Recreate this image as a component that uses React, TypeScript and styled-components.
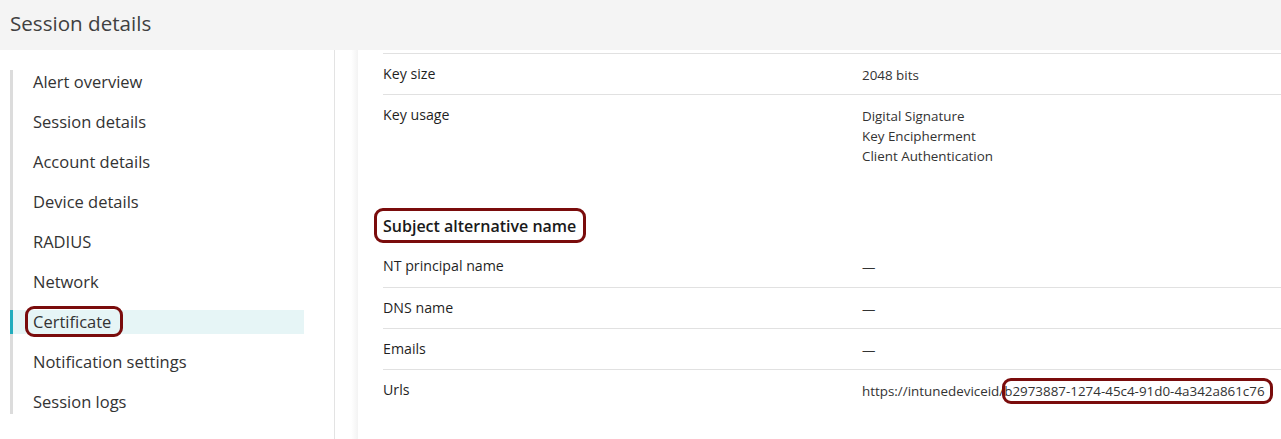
import React from 'react';
import styled, { createGlobalStyle } from 'styled-components';

const GlobalStyle = createGlobalStyle`
  html, body {
    margin: 0;
    padding: 0;
    background: #fff;
    font-family: 'Open Sans', 'Noto Sans', Arial, sans-serif;
    color: #222;
  }
`;

const Page = styled.div`
  width: 1281px;
  height: 439px;
  overflow: hidden;
  display: flex;
  flex-direction: column;
`;

const Header = styled.header`
  height: 50px;
  flex: none;
  background: #f4f4f4;
  display: flex;
  align-items: center;
  padding: 0 0 5px 10px;
  box-sizing: border-box;
`;

const Title = styled.h1`
  margin: 0;
  font-size: 20.6px;
  font-weight: 400;
  color: #404040;
`;

const Body = styled.div`
  flex: 1;
  display: flex;
  min-height: 0;
`;

const Sidebar = styled.aside`
  width: 335px;
  flex: none;
  border-right: 1px solid #e3e3e3;
  padding: 20px 30px 0 10px;
  box-sizing: border-box;
`;

const NavList = styled.ul`
  list-style: none;
  margin: 0;
  padding: 0;
  border-left: 3px solid #dcdcdc;
  display: flex;
  flex-direction: column;
  gap: 16px;
`;

const NavItem = styled.li<{ $active?: boolean }>`
  height: 24px;
  margin-left: -3px;
  padding-left: 20px;
  border-left: 3px solid ${p => (p.$active ? '#22adbd' : 'transparent')};
  background: ${p => (p.$active ? '#e6f5f6' : 'transparent')};
  font-size: 16.5px;
  line-height: 24px;
  color: #333;
  white-space: nowrap;
`;

const Mark = styled.span<{ $t?: number; $r?: number; $b?: number; $l?: number }>`
  position: relative;
  &::after {
    content: '';
    position: absolute;
    top: ${p => p.$t ?? -6}px;
    right: ${p => p.$r ?? -8}px;
    bottom: ${p => p.$b ?? -6}px;
    left: ${p => p.$l ?? -8}px;
    border: 3px solid #7a0c0c;
    border-radius: 9px;
    pointer-events: none;
  }
`;

const Gutter = styled.div`
  width: 23px;
  flex: none;
  background: linear-gradient(to right, #fff 70%, #f3f3f3);
`;

const Content = styled.main`
  flex: 1;
  padding: 3px 0 0 25px;
  background: #fff;
`;

const Row = styled.div<{ $first?: boolean }>`
  display: grid;
  grid-template-columns: 479px 1fr;
  border-top: ${p => (p.$first ? 'none' : '1px solid #e1e1e1')};
  min-height: 41px;
  padding: 9px 0 8px;
  box-sizing: border-box;
`;

const Label = styled.div`
  font-size: 14.2px;
  line-height: 22px;
  color: #1f1f1f;
`;

const Value = styled.div`
  font-size: 13.4px;
  line-height: 20px;
  color: #333;
  padding-top: 2px;
  white-space: nowrap;
`;

const Dash = styled.span`
  color: #333;
`;

const SectionTitle = styled.h2`
  margin: 40px 0 8px;
  font-size: 16px;
  font-weight: 600;
  line-height: 24px;
  color: #1a1a1a;
`;

const navItems = [
  'Alert overview',
  'Session details',
  'Account details',
  'Device details',
  'RADIUS',
  'Network',
  'Certificate',
  'Notification settings',
  'Session logs',
];

export default function App() {
  return (
    <Page>
      <GlobalStyle />
      <Header>
        <Title>Session details</Title>
      </Header>
      <Body>
        <Sidebar>
          <NavList>
            {navItems.map(item => (
              <NavItem key={item} $active={item === 'Certificate'}>
                {item === 'Certificate' ? <Mark $t={-4} $b={-4} $r={-12}>{item}</Mark> : item}
              </NavItem>
            ))}
          </NavList>
        </Sidebar>
        <Gutter />
        <Content>
          <Row>
            <Label>Key size</Label>
            <Value>2048 bits</Value>
          </Row>
          <Row>
            <Label>Key usage</Label>
            <Value>
              Digital Signature
              <br />
              Key Encipherment
              <br />
              Client Authentication
            </Value>
          </Row>
          <SectionTitle>
            <Mark $t={-7} $b={-6} $l={-9} $r={-10}>Subject alternative name</Mark>
          </SectionTitle>
          <Row $first>
            <Label>NT principal name</Label>
            <Value><Dash>—</Dash></Value>
          </Row>
          <Row>
            <Label>DNS name</Label>
            <Value><Dash>—</Dash></Value>
          </Row>
          <Row>
            <Label>Emails</Label>
            <Value><Dash>—</Dash></Value>
          </Row>
          <Row>
            <Label>Urls</Label>
            <Value>
              https://intunedeviceid/
              <Mark $t={-4} $b={-4} $l={-2} $r={-8}>b2973887-1274-45c4-91d0-4a342a861c76</Mark>
            </Value>
          </Row>
        </Content>
      </Body>
    </Page>
  );
}
